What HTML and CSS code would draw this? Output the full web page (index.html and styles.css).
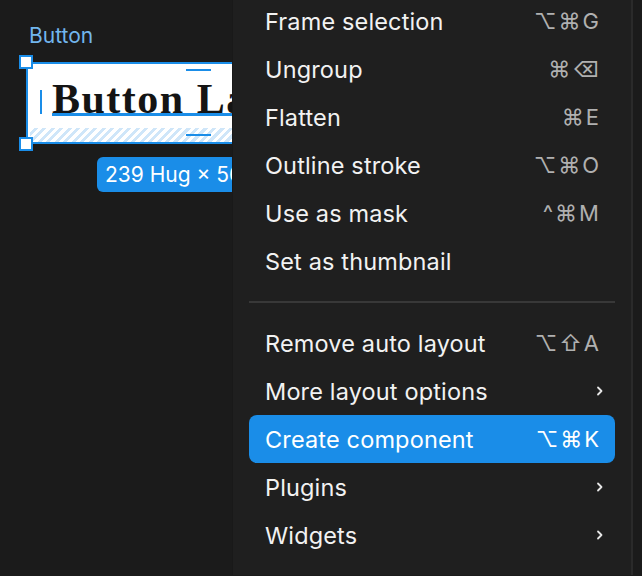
FILE: index.html
```html
<!DOCTYPE html>
<html lang="en">
<head>
    <meta charset="UTF-8">
    <meta name="viewport" content="width=device-width, initial-scale=1.0">
    <title>Context menu</title>
    <link rel="stylesheet" href="styles.css">
</head>
<body>
    <div class="canvas">
        <!-- selected layer on the canvas -->
        <div class="layer">
            <div class="layer-name">Button</div>
            <div class="frame">
                <span class="handle handle-tl"></span>
                <span class="handle handle-bl"></span>
                <span class="pad-mark pad-top"></span>
                <span class="pad-mark pad-bottom"></span>
                <span class="caret"></span>
                <div class="frame-text">Button Label</div>
                <div class="pad-hatch"></div>
            </div>
            <div class="size-tag">239 Hug × 56 Hug</div>
        </div>

        <!-- context menu -->
        <div class="menu">
            <div class="menu-item"><span>Frame selection</span><span class="keys">⌥⌘G</span></div>
            <div class="menu-item"><span>Ungroup</span><span class="keys">⌘⌫</span></div>
            <div class="menu-item"><span>Flatten</span><span class="keys">⌘E</span></div>
            <div class="menu-item"><span>Outline stroke</span><span class="keys">⌥⌘O</span></div>
            <div class="menu-item"><span>Use as mask</span><span class="keys">^⌘M</span></div>
            <div class="menu-item"><span>Set as thumbnail</span></div>
            <div class="menu-sep"></div>
            <div class="menu-item"><span>Remove auto layout</span><span class="keys">⌥⇧A</span></div>
            <div class="menu-item"><span>More layout options</span>
                <svg class="chev" width="8" height="12" viewBox="0 0 8 12"><path d="M2 2.5l3.5 3.5L2 9.5" fill="none" stroke="currentColor" stroke-width="1.8" stroke-linecap="round" stroke-linejoin="round"/></svg>
            </div>
            <div class="menu-item active"><span>Create component</span><span class="keys">⌥⌘K</span></div>
            <div class="menu-item"><span>Plugins</span>
                <svg class="chev" width="8" height="12" viewBox="0 0 8 12"><path d="M2 2.5l3.5 3.5L2 9.5" fill="none" stroke="currentColor" stroke-width="1.8" stroke-linecap="round" stroke-linejoin="round"/></svg>
            </div>
            <div class="menu-item"><span>Widgets</span>
                <svg class="chev" width="8" height="12" viewBox="0 0 8 12"><path d="M2 2.5l3.5 3.5L2 9.5" fill="none" stroke="currentColor" stroke-width="1.8" stroke-linecap="round" stroke-linejoin="round"/></svg>
            </div>
        </div>
    </div>
</body>
</html>
```

FILE: styles.css
```css
body {
    margin: 0;
    background-color: #181818;
    font-family: Inter, "Noto Sans", sans-serif;
    overflow: hidden;
}

.canvas {
    position: relative;
    width: 642px;
    height: 576px;
    background-color: #1b1b1b;
    overflow: hidden;
}

.layer {
    padding: 24px 0 0 26px;
}

.layer-name {
    color: #72b6ee;
    font-size: 21px;
    line-height: 24px;
    padding-left: 3px;
    margin-bottom: 14px;
}

.frame {
    position: relative;
    width: 204px;
    height: 78px;
    background-color: #fff;
    border: 2px solid #1a8de8;
    border-right: none;
    padding: 0 0 0 2px;
    box-sizing: content-box;
}

.frame-text {
    margin: 15px 0 0 22px;
    height: 34px;
    line-height: 40px;
    font-family: "Liberation Serif", serif;
    font-weight: bold;
    font-size: 42px;
    letter-spacing: 1.5px;
    color: #141414;
    white-space: nowrap;
    overflow: hidden;
    border-bottom: 3px solid #1a8de8;
}

.pad-hatch {
    margin-top: 12px;
    height: 14px;
    background: repeating-linear-gradient(135deg, #fff 0 3px, #cfe6f9 3px 6px);
}

.handle {
    position: absolute;
    left: -9px;
    width: 10px;
    height: 10px;
    background-color: #fff;
    border: 2px solid #1a8de8;
    z-index: 2;
}

.handle-tl { top: -9px; }
.handle-bl { bottom: -9px; }

.pad-mark {
    position: absolute;
    left: 158px;
    width: 25px;
    height: 2px;
    background-color: #1a8de8;
}

.pad-top { top: 5px; }
.pad-bottom { bottom: 6px; }

.caret {
    position: absolute;
    left: 12px;
    top: 26px;
    width: 2px;
    height: 24px;
    background-color: #1a8de8;
}

.size-tag {
    display: inline-block;
    margin: 13px 0 0 71px;
    padding: 0 8px;
    height: 35px;
    line-height: 35px;
    border-radius: 6px;
    background-color: #1a8de8;
    color: #fff;
    font-size: 21px;
    white-space: nowrap;
}

.menu {
    position: absolute;
    top: -19px;
    left: 232px;
    width: 366px;
    padding: 16px;
    background-color: #1f1f1f;
    border-left: 1px solid #191919;
    border-right: 2px solid #2a2a2a;
    color: #f2f2f2;
    font-size: 23.5px;
}

.menu-item {
    display: flex;
    justify-content: space-between;
    align-items: center;
    height: 48px;
    padding: 0 16px;
    border-radius: 8px;
    white-space: nowrap;
    letter-spacing: 0.15px;
}

.menu-item.active {
    background-color: #1a8de8;
    color: #fff;
}

.keys {
    color: #b0b0b0;
    font-size: 22px;
    letter-spacing: 2px;
    margin-right: -2px;
}

.menu-item.active .keys {
    color: #fff;
}

.chev {
    color: #e6e6e6;
    margin-right: -5px;
}

.menu-sep {
    height: 2px;
    margin: 16px 0;
    background-color: #383838;
}
```
